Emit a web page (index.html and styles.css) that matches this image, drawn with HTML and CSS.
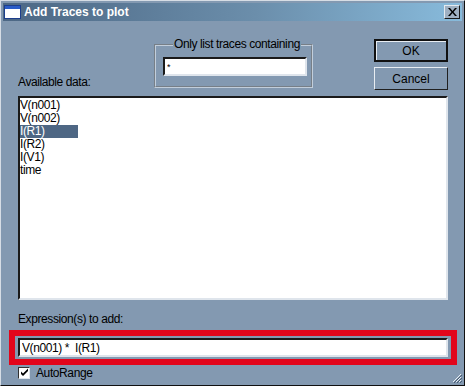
FILE: index.html
```html
<!DOCTYPE html>
<html lang="en">
<head>
    <meta charset="UTF-8">
    <meta name="viewport" content="width=device-width, initial-scale=1.0">
    <title>Add Traces to plot</title>
    <link rel="stylesheet" href="styles.css">
</head>
<body>
    <div class="window">
        <div class="titlebar">
            <svg class="title-icon" width="17" height="14" viewBox="0 0 17 14">
                <rect x="0.5" y="0.5" width="16" height="13" fill="#ffffff" stroke="#1c3e8c"/>
                <rect x="1" y="1" width="15" height="3" fill="#2a5cc8"/>
            </svg>
            <span class="title-text">Add Traces to plot</span>
            <button class="close-btn">
                <svg width="9" height="8" viewBox="0 0 9 8">
                    <path d="M0 0h2l2.5 3 2.5-3h2l-3.5 4 3.5 4h-2l-2.5-3-2.5 3h-2l3.5-4z" fill="#000"/>
                </svg>
            </button>
        </div>

        <div class="content">
            <div class="top-row">
                <div class="avail-label">Available data:</div>

                <fieldset class="filter-group">
                    <legend>Only list traces containing</legend>
                    <input class="field filter-input" type="text" value="*">
                </fieldset>

                <div class="buttons">
                    <button class="btn btn-default">OK</button>
                    <button class="btn">Cancel</button>
                </div>
            </div>

            <div class="list">
                <div class="list-item">V(n001)</div>
                <div class="list-item">V(n002)</div>
                <div class="list-item selected">I(R1)</div>
                <div class="list-item">I(R2)</div>
                <div class="list-item">I(V1)</div>
                <div class="list-item">time</div>
            </div>

            <div class="expr-label">Expression(s) to add:</div>

            <div class="expr-highlight">
                <input class="field expr-input" type="text" value="V(n001) *  I(R1)">
            </div>

            <label class="check-row">
                <span class="checkbox">
                    <svg width="9" height="9" viewBox="0 0 9 9">
                        <path d="M1 3.5l2 2 5-5v2.5l-5 5-2-2z" fill="#000"/>
                    </svg>
                </span>
                AutoRange
            </label>

            <div class="grip">
                <svg width="10" height="10" viewBox="0 0 10 10">
                    <path d="M9 1L1 9M9 4L4 9M9 7L7 9" stroke="#e8eef4" stroke-width="1"/>
                    <path d="M10 2L2 10M10 5L5 10M10 8L8 10" stroke="#4a5d72" stroke-width="1"/>
                </svg>
            </div>
        </div>
    </div>
</body>
</html>
```

FILE: styles.css
```css
* {
    box-sizing: border-box;
    margin: 0;
    padding: 0;
}

html, body {
    background-color: #ffffff;
}

body {
    width: 467px;
    height: 387px;
    overflow: hidden;
    font-family: "Liberation Sans", Arial, sans-serif;
    font-size: 12px;
    letter-spacing: -0.4px;
    color: #000;
}

.window {
    width: 465px;
    height: 386px;
    background-color: #8399b1;
    border: 1px solid;
    border-color: #d6dde5 #101010 #101010 #d6dde5;
    padding: 2px;
    display: flex;
    flex-direction: column;
}

.titlebar {
    height: 18px;
    display: flex;
    align-items: center;
    background: linear-gradient(to right, #4c6784, #6b8eab 55%, #88bbdc);
    padding: 0 2px 0 1px;
}

.title-icon {
    flex: none;
    margin-right: 3px;
}

.title-text {
    font-weight: bold;
    font-size: 12px;
    letter-spacing: 0;
    color: #ffffff;
    flex: 1;
}

.close-btn {
    width: 16px;
    height: 14px;
    background-color: #9fb0c2;
    border: 1px solid;
    border-color: #e4eaf0 #1a1a1a #1a1a1a #e4eaf0;
    display: flex;
    align-items: center;
    justify-content: center;
}

.content {
    flex: 1;
    padding: 0 14px 0 15px;
    display: flex;
    flex-direction: column;
    position: relative;
}

.top-row {
    height: 75px;
    display: flex;
}

.avail-label {
    width: 136px;
    align-self: flex-end;
    margin-bottom: 7px;
}

.filter-group {
    width: 159px;
    height: 50px;
    margin-top: 17px;
    border: 2px groove #c2cedb;
    padding: 0 0 0 7px;
}

.filter-group legend {
    margin-left: 10px;
    padding: 0 1px;
    line-height: 13px;
    white-space: nowrap;
}

.field {
    display: block;
    background-color: #ffffff;
    border: 2px solid;
    border-color: #1a1a1a #dfe5ec #dfe5ec #1a1a1a;
    font-family: inherit;
    font-size: 12px;
    letter-spacing: -0.4px;
    color: #000;
    outline: none;
}

.filter-input {
    width: 144px;
    height: 19px;
    margin-top: 6px;
    padding: 0 2px;
    font-size: 9px;
}

.buttons {
    margin-left: auto;
    margin-top: 18px;
    width: 74px;
    display: flex;
    flex-direction: column;
    gap: 5px;
}

.btn {
    height: 23px;
    background-color: #8399b1;
    border: 1px solid;
    border-color: #e8edf2 #202020 #202020 #e8edf2;
    font-family: inherit;
    font-size: 12px;
    color: #000;
}

.btn-default {
    border: 2px solid #101010;
    box-shadow: inset 1px 1px #e8edf2;
}

.list {
    height: 204px;
    background-color: #ffffff;
    border: 2px solid;
    border-color: #1a1a1a #dfe5ec #dfe5ec #1a1a1a;
    padding-top: 1px;
}

.list-item {
    height: 13px;
    line-height: 13px;
    width: fit-content;
    padding-right: 2px;
    min-width: 58px;
}

.list-item.selected {
    background-color: #4e6784;
    color: #ffffff;
}

.expr-label {
    margin-top: 12px;
    height: 18px;
}

.expr-highlight {
    margin: 0 -9px;
    border: 6px solid #e2051b;
    padding: 2px 3px 2px 3px;
}

.expr-input {
    width: 100%;
    height: 19px;
    padding: 0 2px;
}

.check-row {
    display: flex;
    align-items: center;
    gap: 6px;
    margin-top: 1px;
    height: 13px;
}

.checkbox {
    width: 12px;
    height: 12px;
    background-color: #ffffff;
    border: 1px solid;
    border-color: #303030 #dfe5ec #dfe5ec #303030;
    display: flex;
    align-items: center;
    justify-content: center;
}

.grip {
    position: absolute;
    right: 0;
    bottom: 1px;
    width: 10px;
    height: 10px;
}
```
